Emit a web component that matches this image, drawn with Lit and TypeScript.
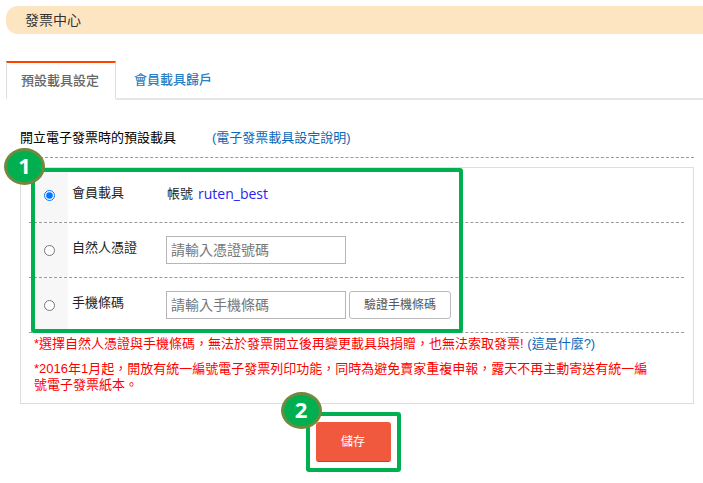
import { LitElement, html, css } from "lit";
import { customElement, property, state } from "lit/decorators.js";

@customElement("step-badge")
class StepBadge extends LitElement {
  @property() label = "";

  static styles = css`
    :host {
      position: absolute;
      z-index: 2;
      box-sizing: border-box;
      width: 41px;
      height: 37px;
      padding-bottom: 4px;
      border: 3px solid #71893f;
      border-radius: 50%;
      background: #00b050;
      color: #fff;
      display: flex;
      align-items: center;
      justify-content: center;
      font: bold 22px/22px "Open Sans", "Noto Sans", sans-serif;
    }
  `;

  render() {
    return html`<span>${this.label}</span>`;
  }
}

@customElement("app-root")
class AppRoot extends LitElement {
  @state() private carrier = "member";

  static styles = css`
    :host {
      display: block;
      padding: 6px 0 10px 6px;
      background: #fff;
      color: #222;
      font: 13px/16px "Liberation Sans", "Noto Sans CJK TC", sans-serif;
    }
    * {
      box-sizing: border-box;
    }
    a {
      color: #0a68b8;
      text-decoration: none;
    }
    h1, h2, p, fieldset {
      margin: 0;
      padding: 0;
      border: 0;
      font-weight: normal;
    }
    .title {
      padding: 4px 19px;
      border-radius: 12px 0 0 12px;
      background: #fee5c1;
      color: #333;
      font-size: 14px;
      line-height: 20px;
    }
    .tabs {
      display: flex;
      margin-top: 27px;
      line-height: 20px;
    }
    .tab {
      padding: 7px 16px 8px 18px;
      border-top: 2px solid transparent;
      border-bottom: 2px solid #e6e6e6;
      color: #2a7fc4;
      font-weight: 500;
    }
    .tab.active {
      padding: 8px 16px 7px 14px;
      border: 1px solid #dedede;
      border-top: 2px solid #ff4400;
      border-bottom: 2px solid #fff;
      color: #666;
    }
    .tabs::after {
      content: "";
      flex: 1;
      border-bottom: 2px solid #e6e6e6;
    }
    .content {
      padding: 26px 9px 0 14px;
    }
    .heading {
      display: flex;
      gap: 36px;
      padding: 2px 0 9px;
      border-bottom: 1px dashed #999;
      line-height: 20px;
    }
    h2 {
      color: #000;
      font-size: inherit;
    }
    .panel {
      margin-top: 9px;
      padding: 0 9px 10px 8px;
      border: 1px solid #dedede;
    }
    .options {
      position: relative;
    }
    .outline {
      position: absolute;
      inset: 0 auto 0 2px;
      width: 432px;
      border: 4px solid #00b050;
      border-radius: 3px;
      pointer-events: none;
    }
    .first {
      left: -25px;
      top: -20px;
    }
    .row {
      display: grid;
      grid-template-columns: 39px 94px 1fr;
      height: 55px;
      align-items: center;
      column-gap: 2px;
      border-bottom: 1px dashed #999;
    }
    .pick {
      align-self: stretch;
      display: flex;
      align-items: center;
      padding-left: 15px;
      background: linear-gradient(90deg, transparent 4px, #f7f7f7 4px);
    }
    .pick input {
      width: 11px;
      height: 11px;
      margin: 0;
    }
    .row label {
      padding: 0 0 4px 2px;
      color: #222;
    }
    .field {
      display: flex;
      align-items: center;
      gap: 3px;
    }
    .account {
      gap: 5px;
      padding: 0 0 3px 1px;
    }
    .user {
      color: #2a1ff0;
      font: 14px/16px "Open Sans", "Noto Sans", sans-serif;
    }
    .field input {
      width: 180px;
      height: 28px;
      padding: 0 4px;
      border: 1px solid #b5b5b5;
      border-radius: 0;
      background: #fff;
      font: inherit;
      font-size: 14px;
      color: #333;
    }
    .field input::placeholder {
      color: #777;
    }
    .verify {
      height: 28px;
      padding: 0 14px;
      border: 1px solid #bbb;
      border-radius: 3px;
      background: #fff;
      color: #555;
      font: inherit;
      font-size: 12px;
    }
    .notes {
      display: grid;
      gap: 9px;
      padding: 3px 32px 0 5px;
      color: #f00;
    }
    .actions {
      display: flex;
      justify-content: center;
      margin-top: 8px;
      padding-right: 8px;
    }
    .target {
      position: relative;
      padding: 6px;
      border: 4px solid #00b050;
      border-radius: 3px;
    }
    .second {
      left: -29px;
      top: -24px;
    }
    .save {
      display: block;
      width: 75px;
      height: 40px;
      padding: 0;
      border: 0;
      border-bottom: 1px solid #b8452f;
      border-radius: 3px;
      background: #f1593f;
      color: #fff;
      font: inherit;
      font-size: 12px;
    }
  `;

  private radio(value: string) {
    return html`<span class="pick">
      <input
        type="radio"
        name="carrier"
        id=${value}
        .checked=${this.carrier === value}
        @change=${() => (this.carrier = value)}
      />
    </span>`;
  }

  render() {
    return html`
      <h1 class="title" lang="zh-TW">發票中心</h1>
      <nav class="tabs" lang="zh-TW">
        <a class="tab active" href="#default" aria-current="page">預設載具設定</a>
        <a class="tab" href="#merge">會員載具歸戶</a>
      </nav>
      <main class="content" lang="zh-TW">
        <div class="heading">
          <h2>開立電子發票時的預設載具</h2>
          <a href="#help">(電子發票載具設定說明)</a>
        </div>
        <form @submit=${(e: Event) => e.preventDefault()}>
          <div class="panel">
            <fieldset class="options" aria-label="預設載具設定">
              <div class="row">
                ${this.radio("member")}
                <label for="member">會員載具</label>
                <div class="field account">
                  <span>帳號</span><span class="user">ruten_best</span>
                </div>
              </div>
              <div class="row">
                ${this.radio("citizen")}
                <label for="citizen">自然人憑證</label>
                <div class="field">
                  <input type="text" aria-label="自然人憑證" placeholder="請輸入憑證號碼" />
                </div>
              </div>
              <div class="row">
                ${this.radio("mobile")}
                <label for="mobile">手機條碼</label>
                <div class="field">
                  <input type="text" aria-label="手機條碼" placeholder="請輸入手機條碼" />
                  <button class="verify" type="button">驗證手機條碼</button>
                </div>
              </div>
              <div class="outline"></div>
              <step-badge class="first" label="1"></step-badge>
            </fieldset>
            <div class="notes">
              <p>
                *選擇自然人憑證與手機條碼，無法於發票開立後再變更載具與捐贈，也無法索取發票!
                <a href="#what">(這是什麼?)</a>
              </p>
              <p>*2016年1月起，開放有統一編號電子發票列印功能，同時為避免賣家重複申報，露天不再主動寄送有統一編號電子發票紙本。</p>
            </div>
          </div>
          <div class="actions">
            <div class="target">
              <button class="save" type="submit">儲存</button>
              <step-badge class="second" label="2"></step-badge>
            </div>
          </div>
        </form>
      </main>
    `;
  }
}
